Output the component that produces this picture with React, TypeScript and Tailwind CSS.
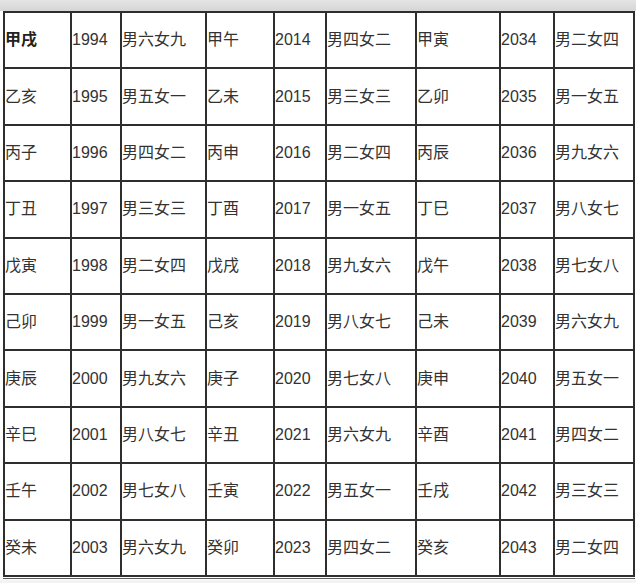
const rows: string[][] = [
  ['甲戌', '1994', '男六女九', '甲午', '2014', '男四女二', '甲寅', '2034', '男二女四'],
  ['乙亥', '1995', '男五女一', '乙未', '2015', '男三女三', '乙卯', '2035', '男一女五'],
  ['丙子', '1996', '男四女二', '丙申', '2016', '男二女四', '丙辰', '2036', '男九女六'],
  ['丁丑', '1997', '男三女三', '丁酉', '2017', '男一女五', '丁巳', '2037', '男八女七'],
  ['戊寅', '1998', '男二女四', '戊戌', '2018', '男九女六', '戊午', '2038', '男七女八'],
  ['己卯', '1999', '男一女五', '己亥', '2019', '男八女七', '己未', '2039', '男六女九'],
  ['庚辰', '2000', '男九女六', '庚子', '2020', '男七女八', '庚申', '2040', '男五女一'],
  ['辛巳', '2001', '男八女七', '辛丑', '2021', '男六女九', '辛酉', '2041', '男四女二'],
  ['壬午', '2002', '男七女八', '壬寅', '2022', '男五女一', '壬戌', '2042', '男三女三'],
  ['癸未', '2003', '男六女九', '癸卯', '2023', '男四女二', '癸亥', '2043', '男二女四'],
]

export default function App() {
  return (
    <div className="h-[583px] w-[636px] overflow-hidden bg-white font-['Liberation_Sans','Noto_Sans_CJK_SC',sans-serif] text-[16px] text-[#333]">
      <div className="h-[11px] bg-[linear-gradient(180deg,#e4e4e4,#d6d6d6)]" />
      <div className="ml-[3px] w-[632px]">
        <div className="grid h-[566px] grid-cols-[65px_48px_83px_66px_50px_88px_82px_52px_78px] grid-rows-[repeat(10,1fr)] gap-[2px] border-2 border-[#2e2e2e] bg-[#2e2e2e]">
          {rows.flatMap((row, r) =>
            row.map((cell, c) => (
              <div
                key={`${r}-${c}`}
                className={`flex items-center whitespace-nowrap bg-white ${r === 0 && c === 0 ? 'font-bold text-[#222]' : ''}`}
              >
                {cell}
              </div>
            )),
          )}
        </div>
        <div className="mt-[1px] h-[1px] bg-[#5a5a5a]" />
      </div>
      <div className="mt-[1px] h-[4px] bg-[#f3f3f3]" />
    </div>
  )
}
